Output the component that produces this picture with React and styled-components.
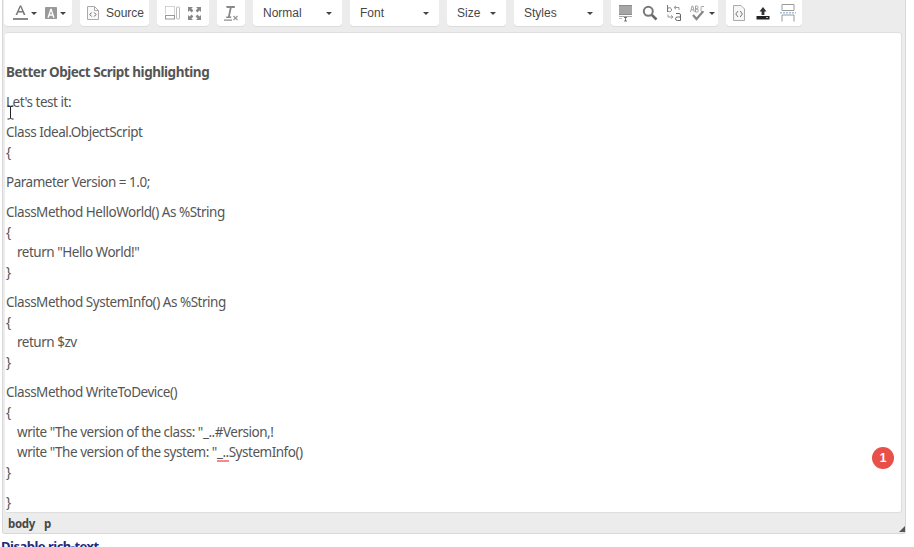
import React from 'react'
import styled, { createGlobalStyle } from 'styled-components'

const Global = createGlobalStyle`
  html, body {
    margin: 0;
    height: 547px;
    overflow: hidden;
    background: #fff;
  }
`

const Page = styled.div`
  width: 914px;
  height: 547px;
  overflow: hidden;
  position: relative;
`

const Editor = styled.div`
  width: 904px;
  margin-left: 2px;
  height: 534px;
  box-sizing: border-box;
  background: #ececec;
  border: 1px solid #d8d8d8;
  border-top: 0;
  border-radius: 0 0 3px 3px;
  display: flex;
  flex-direction: column;
  position: relative;
`

const Toolbar = styled.div`
  height: 32px;
  flex: none;
  box-sizing: border-box;
  padding: 0 0 6px 1px;
  display: flex;
  align-items: flex-end;
  gap: 8px;
`

const Group = styled.div`
  width: ${p => p.$w}px;
  height: 32px;
  box-sizing: border-box;
  background: #fff;
  border-radius: 4px;
  box-shadow: 0 1px 0 #dcdcdc;
  display: flex;
  align-items: center;
  padding: 6px ${p => p.$pad ?? 8}px 0;
  gap: ${p => p.$gap ?? 6}px;
  font: 12px "Liberation Sans", Arial, sans-serif;
  color: #474747;
`

const Combo = styled(Group)`
  justify-content: space-between;
  padding: 6px 10px 0 10px;
`

const Arrow = styled.span`
  width: 0;
  height: 0;
  border: 3px solid transparent;
  border-top: 3px solid #444;
  border-bottom: 0;
  flex: none;
  margin-left: ${p => p.$pull ?? 0}px;
`

const Spacer = styled.span`
  width: 2px;
  flex: none;
`

const Content = styled.div`
  flex: none;
  height: 481px;
  box-sizing: border-box;
  margin: 0 3px 0 2px;
  padding: 29px 0 0 1px;
  background: #fff;
  border: 1px solid #dedede;
  border-left: 0;
  border-radius: 3px;
  overflow: hidden;
  font: 13.5px/20px "Noto Sans", sans-serif;
  letter-spacing: -0.48px;
  color: #555;
`

const Para = styled.p`
  margin: 0 0 10px;
  font-weight: ${p => (p.$bold ? 700 : 400)};
`

const Line = styled.div`
  padding-left: ${p => (p.$indent ? 11 : 0)}px;
  white-space: pre;
`

const Marked = styled.span`
  position: relative;
  &::after {
    content: '';
    position: absolute;
    left: 0;
    right: 0;
    bottom: -1px;
    height: 2px;
    background: #f58a8a;
  }
`

const StatusBar = styled.div`
  flex: 1;
  display: flex;
  align-items: center;
  gap: 9px;
  padding: 0 0 0 5px;
  font: 700 11.5px "Noto Sans", sans-serif;
  letter-spacing: -0.3px;
  color: #484848;
  position: relative;
`

const Grip = styled.span`
  position: absolute;
  right: 0;
  bottom: 1px;
  width: 6px;
  height: 6px;
  background: #555;
  clip-path: polygon(100% 0, 100% 100%, 0 100%);
`

const RichLink = styled.a`
  display: block;
  margin: 3px 0 0 1px;
  font: 700 13px/18px "Noto Sans", sans-serif;
  letter-spacing: -0.5px;
  color: #1b2a80;
`

const Badge = styled.span`
  position: absolute;
  left: 872px;
  top: 447px;
  width: 22px;
  height: 22px;
  border-radius: 50%;
  background: #e9504a;
  color: #fff;
  font: 700 12px/22px "Liberation Sans", Arial, sans-serif;
  text-align: center;
`

const Cursor = styled.svg`
  position: absolute;
  left: 7px;
  top: 105px;
`

const Svg = styled.svg`
  flex: none;
  display: block;
`

const Icon = ({ w = 16, h = 16, vw, vh, children }) => (
  <Svg width={w} height={h} viewBox={`0 0 ${vw ?? w} ${vh ?? h}`}>{children}</Svg>
)

const TextColor = () => (
  <Icon w={15} h={18}>
    <path d="M2.5 11 L6.8 1.5 h1.4 L12.5 11 h-1.8 l-1-2.5 H5.2 l-1 2.5z M5.9 7 h3.2 L7.5 3z" fill="#777" fillRule="evenodd" />
    <rect x="0" y="14" width="15" height="2" fill="#8a8a8a" />
  </Icon>
)

const BgColor = () => (
  <Icon w={12} h={12} vw={14} vh={14}>
    <rect x="0" y="0" width="14" height="14" rx="1" fill="#999" />
    <path d="M2.8 12.5 L6.2 2 h1.6 L11.2 12.5 h-1.8 l-.7 -2.3 H5.3 l-.7 2.3z M5.8 8.6 h2.4 L7 4.6z" fill="#fff" fillRule="evenodd" />
  </Icon>
)

const SourceIcon = () => (
  <Icon w={12} h={14}>
    <path d="M.5 .5 h7 l4 4 v9 h-11z M7.5 .5 v4 h4" fill="#f8f8f8" stroke="#aaa" />
    <path d="M4.6 6.5 L2.8 8.5 4.6 10.5 M7.2 6.5 L9 8.5 7.2 10.5" fill="none" stroke="#666" />
  </Icon>
)

const ShowBlocks = () => (
  <Icon w={16} h={16}>
    <path d="M1.5 1.5 h9 v8 M1.5 1.5 v8" fill="none" stroke="#aaa" strokeDasharray="1 1" />
    <rect x="1.5" y="10.5" width="9" height="3.5" fill="#fff" stroke="#999" />
    <rect x="12.5" y="2" width="3" height="12" rx="1" fill="#fff" stroke="#bbb" />
  </Icon>
)

const Maximize = () => (
  <Icon w={15} h={15}>
    <path d="M1 1 h5 l-1.6 1.6 2 2 -1.8 1.8 -2 -2 L1 6z M14 1 v5 l-1.6 -1.6 -2 2 -1.8 -1.8 2 -2 L9 1z M1 14 v-5 l1.6 1.6 2 -2 1.8 1.8 -2 2 L6 14z M14 14 h-5 l1.6 -1.6 -2 -2 1.8 -1.8 2 2 L14 9z" fill="#888" />
  </Icon>
)

const RemoveFormat = () => (
  <Icon w={16} h={17}>
    <path d="M3 1 h9 l-.4 2 h-3 l-1.8 8.5 h1.6 l-.3 1.5 h-5 l.3 -1.5 h1.6 l1.8 -8.5 h-3z" fill="#888" />
    <rect x="1" y="14.5" width="8" height="1.2" fill="#888" />
    <path d="M10.5 11 l4 4 M14.5 11 l-4 4" stroke="#999" strokeWidth="1.3" />
  </Icon>
)

const SelectAll = () => (
  <Icon w={16} h={18}>
    <rect x="1" y="1" width="13" height="10" fill="#8c8c8c" />
    <path d="M1 3 h13 M1 5 h13 M1 7 h13 M1 9 h13" stroke="#d8d8d8" strokeWidth="0.7" />
    <path d="M1 12.5 h13" stroke="#aaa" />
    <path d="M1 14.5 h3" stroke="#bbb" />
    <path d="M6 13.5 h3 M7.5 13.5 v3.5 M6 17 h3" stroke="#555" strokeWidth="0.8" />
  </Icon>
)

const Search = () => (
  <Icon w={16} h={16}>
    <circle cx="6.3" cy="6.3" r="4.5" fill="none" stroke="#777" strokeWidth="2" />
    <path d="M9.8 9.8 L14.5 14.5" stroke="#666" strokeWidth="2.6" />
  </Icon>
)

const Replace = () => (
  <Icon w={16} h={18}>
    <path d="M1.5 1 v7 M1.5 5.7 a2 2 0 1 1 0 .1" fill="none" stroke="#777" />
    <path d="M8 3.5 h5 v2.5 M8 3.5 l2 -1.6 M8 3.5 l2 1.6" fill="none" stroke="#999" />
    <path d="M7 13 h-5 v-2.5 M7 13 l-2 -1.6 M7 13 l-2 1.6" fill="none" stroke="#999" />
    <path d="M10 9.5 h3 q1.5 0 1.5 1.5 v5.5 h-3 q-2 0 -2 -1.7 q0 -1.8 2 -1.8 h3" fill="none" stroke="#666" />
  </Icon>
)

const Spell = () => (
  <Icon w={17} h={16}>
    <path d="M.5 7 L2 1 h.8 L4.3 7 M1.2 4.8 h2.4 M5.5 1 v6 h1.8 q1 0 1 -1.5 q0 -1.5 -1 -1.5 H5.5 M5.5 4 h1.6 q.9 0 .9 -1.5 Q8 1 7 1 H5.5 M14 1.5 h-2 q-1 0 -1 1 v3 q0 1 1 1 h2" fill="none" stroke="#999" strokeWidth=".9" />
    <path d="M3 10 L6.5 14 L13 6.5" fill="none" stroke="#888" strokeWidth="2.2" />
  </Icon>
)

const PageIcon = () => (
  <Icon w={14} h={16}>
    <path d="M1.5 .5 h7.5 l3.5 3.5 v11.5 h-11z" fill="#f6f6f6" stroke="#aaa" />
    <path d="M6 6 L3.8 9 6 12 M8.2 6 L10.4 9 8.2 12" fill="none" stroke="#777" />
  </Icon>
)

const Upload = () => (
  <Icon w={16} h={16}>
    <path d="M8 2 L11.5 6.5 H9.4 V10 H6.6 V6.5 H4.5z" fill="#333" />
    <rect x="1.5" y="11" width="13" height="3.5" fill="#222" />
    <rect x="11" y="12" width="2" height="1" fill="#bbb" />
  </Icon>
)

const PageBreak = () => (
  <Icon w={16} h={18}>
    <path d="M2 .5 v6 M14 .5 v6 M2 .5 h12 M2 6.5 h12 M2 11 v6.5 M14 11 v6.5 M2 11 h12" fill="none" stroke="#999" />
    <path d="M0 8.7 h16" stroke="#9cc3e6" strokeDasharray="2 1" strokeWidth="1.4" />
  </Icon>
)

const body = [
  { bold: true, lines: ['Better Object Script highlighting'] },
  { lines: ["Let's test it:"] },
  { lines: ['Class Ideal.ObjectScript', '{'] },
  { lines: ['Parameter Version = 1.0;'] },
  { lines: ['ClassMethod HelloWorld() As %String', '{', '>return "Hello World!"', '}'] },
  { lines: ['ClassMethod SystemInfo() As %String', '{', '>return $zv', '}'] },
  {
    lines: [
      'ClassMethod WriteToDevice()',
      '{',
      '>write "The version of the class: "_..#Version,!',
      'MARK',
      '}',
    ],
  },
  { lines: ['}'] },
]

const renderLine = (line, i) => {
  if (line === 'MARK') {
    return (
      <Line key={i} $indent>
        write "The version of the system: "<Marked>_..</Marked>SystemInfo()
      </Line>
    )
  }
  const indent = line[0] === '>'
  return <Line key={i} $indent={indent}>{indent ? line.slice(1) : line}</Line>
}

export default function App() {
  return (
    <Page>
      <Global />
      <Editor>
        <Toolbar>
          <Group $w={68} $pad={9} $gap={3}>
            <TextColor /><Arrow />
            <Spacer />
            <BgColor /><Arrow />
          </Group>
          <Group $w={69} $pad={7} $gap={7}>
            <SourceIcon />Source
          </Group>
          <Group $w={52} $pad={7} $gap={7}>
            <ShowBlocks /><Maximize />
          </Group>
          <Group $w={28} $pad={6}>
            <RemoveFormat />
          </Group>
          <Combo $w={89}>Normal<Arrow /></Combo>
          <Combo $w={89}>Font<Arrow /></Combo>
          <Combo $w={59}>Size<Arrow /></Combo>
          <Combo $w={89}>Styles<Arrow /></Combo>
          <Group $w={107} $pad={7} $gap={8}>
            <SelectAll /><Search /><Replace />
            <Spell /><Arrow $pull={-6} />
          </Group>
          <Group $w={76} $pad={6} $gap={9}>
            <PageIcon /><Upload /><PageBreak />
          </Group>
        </Toolbar>
        <Content>
          {body.map((p, i) => (
            <Para key={i} $bold={p.bold}>{p.lines.map(renderLine)}</Para>
          ))}
        </Content>
        <StatusBar>
          <span>body</span><span>p</span>
          <Grip />
        </StatusBar>
      </Editor>
      <RichLink>Disable rich-text</RichLink>
      <Badge>1</Badge>
      <Cursor width="7" height="16" viewBox="0 0 7 16">
        <path d="M.5 1 h2 l1 1 1-1 h2 M3.5 2 v11 M.5 14 h2 l1-1 1 1 h2" fill="none" stroke="#222" strokeWidth="1" />
      </Cursor>
    </Page>
  )
}
